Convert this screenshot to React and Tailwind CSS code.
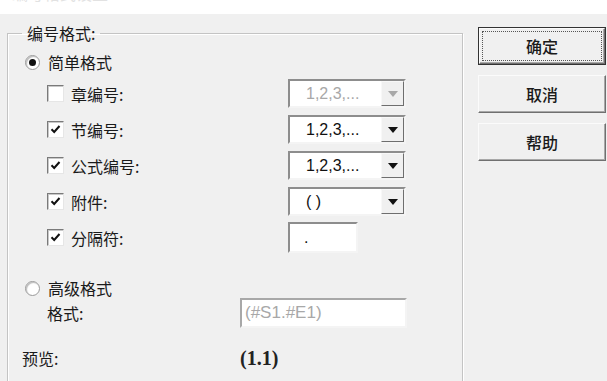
import React from "react";

const cjk = { fontFamily: '"Noto Sans CJK SC", "Noto Sans", sans-serif' };

function Check({ checked }) {
  return (
    <span className="w-[17px] h-[17px] bg-white border border-t-[#7a7a7a] border-l-[#7a7a7a] border-b-[#e6e6e6] border-r-[#e6e6e6] shadow-[inset_1px_1px_0_#c8c8c8] flex items-center justify-center shrink-0">
      {checked && (
        <svg width="11" height="11" viewBox="0 0 11 11">
          <path d="M1.5 5.2 L4.2 8 L9.5 2" fill="none" stroke="#111" strokeWidth="2" />
        </svg>
      )}
    </span>
  );
}

function Radio({ on }) {
  return (
    <span className="w-[15px] h-[15px] rounded-full bg-white border border-[#9a9a9a] shadow-[inset_1px_1px_1px_#bbb] flex items-center justify-center shrink-0">
      {on && <span className="w-[7px] h-[7px] rounded-full bg-[#111]" />}
    </span>
  );
}

function Combo({ text, disabled }) {
  return (
    <div className="w-[118px] h-[29px] flex bg-white border-2 border-t-[#8d8d8d] border-l-[#8d8d8d] border-b-[#f4f4f4] border-r-[#f4f4f4]">
      <div
        className={`flex-1 flex items-center pl-[16px] text-[16px] ${disabled ? "text-[#a8a8a8]" : "text-[#111]"}`}
        style={{ fontFamily: '"Liberation Sans", sans-serif' }}
      >
        {text}
      </div>
      <div className="w-[23px] bg-[#f0f0f0] border border-t-[#f8f8f8] border-l-[#f8f8f8] border-b-[#6e6e6e] border-r-[#6e6e6e] flex items-center justify-center">
        <svg width="10" height="6" viewBox="0 0 10 6">
          <path d="M0 0 H10 L5 6 Z" fill={disabled ? "#a8a8a8" : "#111"} />
        </svg>
      </div>
    </div>
  );
}

function Row({ label, children }) {
  return (
    <div className="h-[29px] flex items-center">
      <div className="w-[240px] pl-[39px] flex items-center gap-[7px]">
        <Check checked={label !== "章编号:"} />
        <span className="text-[16px] text-[#1a1a1a]" style={cjk}>{label}</span>
      </div>
      <div className="pl-[40px]">{children}</div>
    </div>
  );
}

function Btn({ label, def }) {
  return (
    <div className={`h-[38px] w-[128px] ${def ? "border border-[#333] p-0" : ""}`}>
      <div className="h-full bg-[#f0f0f0] border border-t-[#fbfbfb] border-l-[#fbfbfb] border-b-[#707070] border-r-[#707070] shadow-[inset_-1px_-1px_0_#a8a8a8] flex items-center justify-center p-[2px]">
        <div className={`w-full h-full flex items-center justify-center ${def ? "border border-dotted border-[#555]" : ""}`}>
          <span className="text-[16px] text-[#1a1a1a] font-medium" style={cjk}>{label}</span>
        </div>
      </div>
    </div>
  );
}

export default function App() {
  return (
    <div className="w-[607px] h-[381px] overflow-hidden bg-[#f0f0f0] select-none" style={cjk}>
      <div className="h-[14px] bg-white overflow-hidden">
        <div className="ml-[12px] -mt-[17px] text-[16px] leading-[20px] text-[#e2e2e2]" style={cjk}>编号格式设置</div>
      </div>
      <div className="flex">
        <fieldset className="ml-[7px] mt-[7px] w-[456px] h-[420px] shrink-0 border border-[#c4c4c4] shadow-[inset_1px_1px_0_#fff,1px_1px_0_#fff]">
          <legend className="ml-[14px] px-[5px] text-[16px] leading-[24px] text-[#1a1a1a]" style={cjk}>
            编号格式:
          </legend>
          <div className="pt-[5px] flex flex-col">
            <div className="h-[24px] pl-[17px] flex items-center gap-[8px]">
              <Radio on />
              <span className="text-[16px] text-[#1a1a1a]" style={cjk}>简单格式</span>
            </div>
            <div className="mt-[5px] flex flex-col gap-[7px]">
              <Row label="章编号:"><Combo text="1,2,3,..." disabled /></Row>
              <Row label="节编号:"><Combo text="1,2,3,..." /></Row>
              <Row label="公式编号:"><Combo text="1,2,3,..." /></Row>
              <Row label="附件:"><Combo text="( )" /></Row>
              <Row label="分隔符:">
                <div className="w-[70px] h-[31px] bg-white border-2 border-t-[#8d8d8d] border-l-[#8d8d8d] border-b-[#f4f4f4] border-r-[#f4f4f4] flex items-center pl-[14px] text-[16px] text-[#111]" style={{ fontFamily: '"Liberation Sans", sans-serif' }}>
                  .
                </div>
              </Row>
            </div>
            <div className="mt-[26px] h-[20px] pl-[17px] flex items-center gap-[8px]">
              <Radio />
              <span className="text-[16px] text-[#1a1a1a]" style={cjk}>高级格式</span>
            </div>
            <div className="h-[30px] flex items-center">
              <span className="w-[232px] pl-[39px] text-[16px] text-[#1a1a1a]" style={cjk}>格式:</span>
              <div className="w-[167px] h-[30px] bg-white border-2 border-t-[#a8a8a8] border-l-[#a8a8a8] border-b-[#f4f4f4] border-r-[#f4f4f4] flex items-center pl-[3px] text-[17px] text-[#a8a8a8]" style={{ fontFamily: '"Liberation Sans", sans-serif' }}>
                (#S1.#E1)
              </div>
            </div>
            <div className="mt-[18px] h-[24px] flex items-center">
              <span className="w-[232px] pl-[14px] text-[16px] text-[#1a1a1a]" style={cjk}>预览:</span>
              <span className="text-[20px] font-bold text-[#222]" style={{ fontFamily: '"Liberation Serif", serif' }}>(1.1)</span>
            </div>
          </div>
        </fieldset>
        <div className="ml-[15px] mt-[13px] flex flex-col gap-[10px]">
          <Btn label="确定" def />
          <Btn label="取消" />
          <Btn label="帮助" />
        </div>
      </div>
    </div>
  );
}
